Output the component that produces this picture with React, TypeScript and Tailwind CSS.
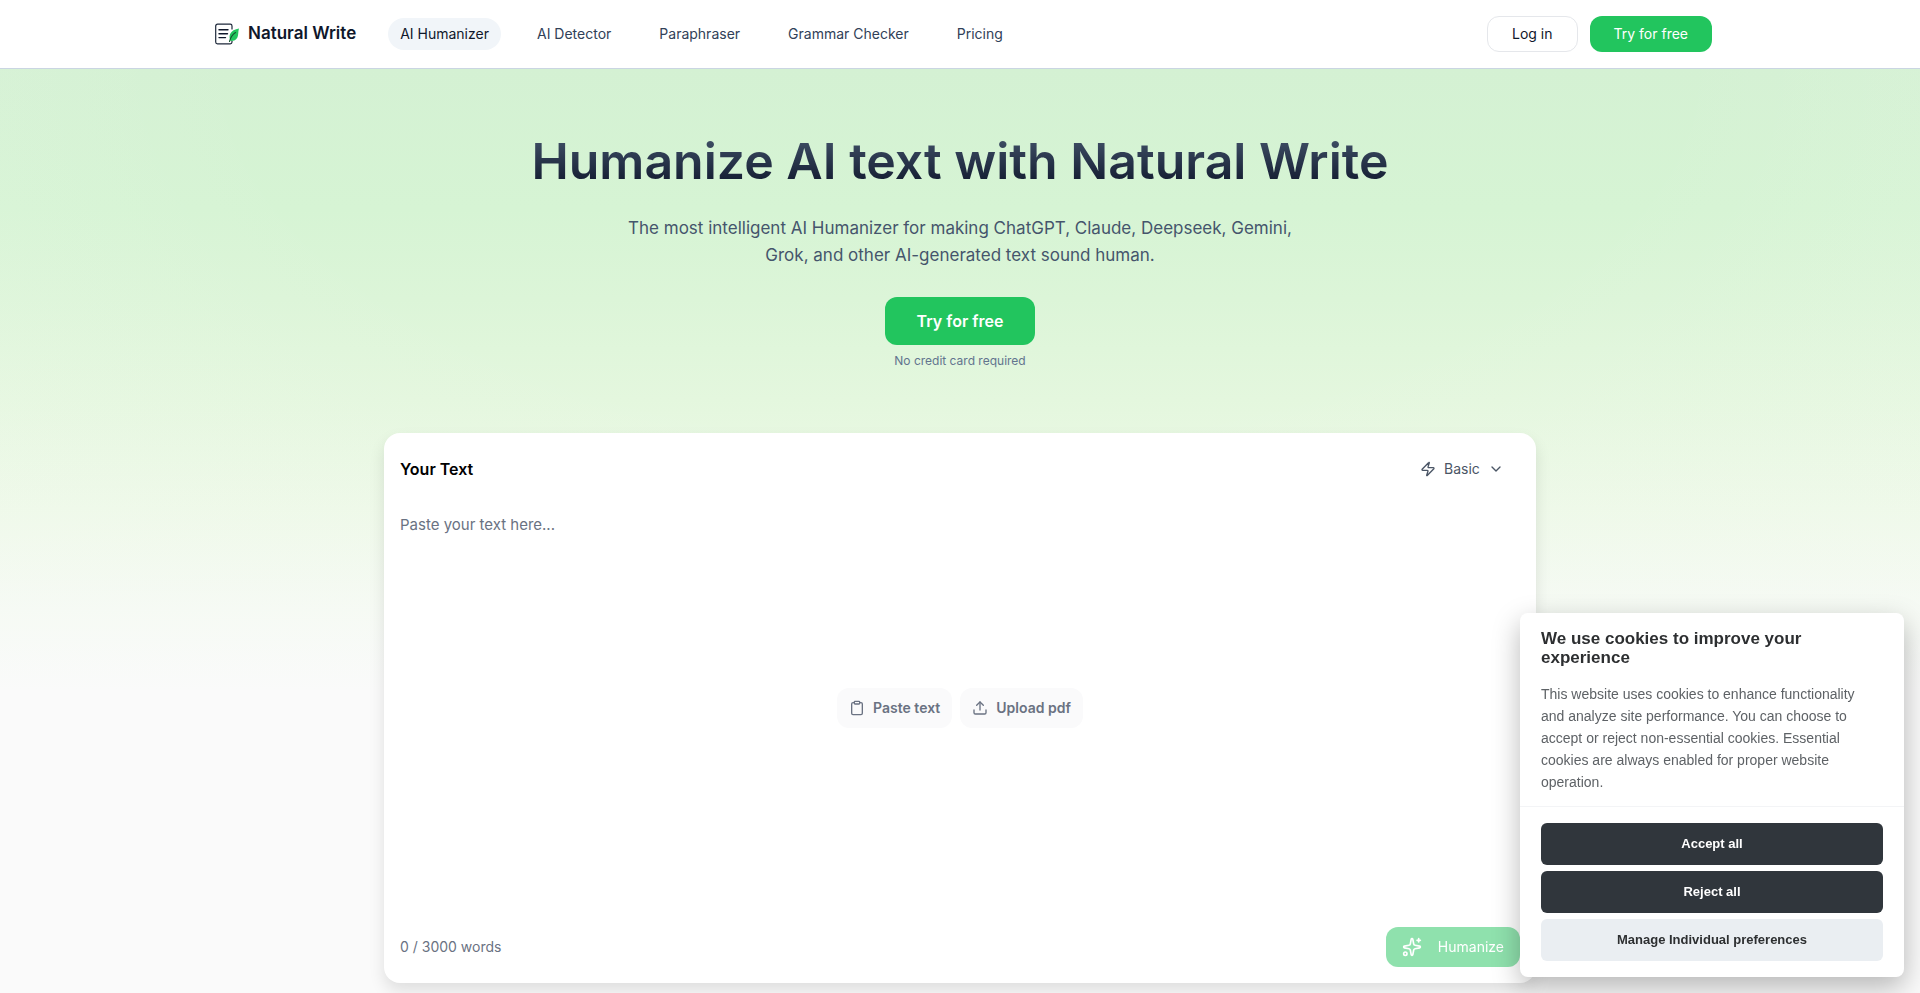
import React from "react";
import { ChevronDown, Clipboard, Sparkles, Upload, Zap } from "lucide-react";

const links = [
  { label: "AI Humanizer", active: true },
  { label: "AI Detector", active: false },
  { label: "Paraphraser", active: false },
  { label: "Grammar Checker", active: false },
  { label: "Pricing", active: false },
];

function Logo(): React.JSX.Element {
  return (
    <svg width="26" height="22" viewBox="0 0 26 22" fill="none" aria-hidden="true">
      <path
        d="M18 6.500V3A1.800 1.800 0 0 0 16.200 1.200H3.500A1.800 1.800 0 0 0 1.700 3v16a1.800 1.800 0 0 0 1.800 1.800h12.700A1.800 1.800 0 0 0 18 19v-1"
        stroke="#1e293b"
        strokeWidth="1.2"
      />
      <path d="M5 6.800h9M5 10.800h8.500M5 14.600h6.500" stroke="#0f172a" strokeWidth="1.400" strokeLinecap="round" />
      <path d="M25 5.500c-4 .5-7.500 2.500-8.900 5.500-1 2.300-.6 4.700.5 7 2.900.2 5.500-.8 6.800-3.500 1.200-2.500.6-5.900 1.600-9Z" fill="#22c55e" />
      <path d="M21.500 9.500c-3 2-5 5-6 9" stroke="#14532d" strokeWidth="1.100" strokeLinecap="round" />
    </svg>
  );
}

function Navbar(): React.JSX.Element {
  return (
    <header className="border-b border-slate-300 bg-white">
      <div className="mx-auto flex h-[68px] max-w-[1504px] items-center justify-between">
        <div className="flex items-center">
          <a href="#" className="flex items-center gap-2 pl-1.5 text-[17px] font-semibold text-slate-900">
            <Logo />
            Natural Write
          </a>
          <nav className="ml-8 flex gap-6">
            {links.map((link) => (
              <a
                key={link.label}
                href="#"
                className={
                  link.active
                    ? "rounded-full bg-slate-100 px-3 py-1.5 text-sm text-slate-900"
                    : "rounded-full px-3 py-1.5 text-sm text-slate-700"
                }
              >
                {link.label}
              </a>
            ))}
          </nav>
        </div>
        <div className="flex gap-3">
          <button className="h-9 rounded-xl border border-gray-200 px-6 text-sm text-slate-900">
            Log in
          </button>
          <button className="h-9 rounded-xl bg-[#22c55e] px-6 text-sm text-white">
            Try for free
          </button>
        </div>
      </div>
    </header>
  );
}

function Hero(): React.JSX.Element {
  return (
    <section className="flex flex-col items-center pt-16 text-center">
      <h1 className="bg-gradient-to-t from-slate-900 to-slate-600 bg-clip-text text-[50px] leading-[56px] font-semibold text-transparent">
        Humanize AI text with Natural Write
      </h1>
      <p className="mt-[26px] max-w-[700px] text-[17px] leading-[27px] text-slate-600">
        The most intelligent AI Humanizer for making ChatGPT, Claude, Deepseek,
        Gemini, Grok, and other AI-generated text sound human.
      </p>
      <button className="mt-7 h-12 rounded-xl bg-[#22c55e] px-8 text-base font-semibold text-white">
        Try for free
      </button>
      <p className="mt-2 text-xs text-slate-500">No credit card required</p>
    </section>
  );
}

function Editor(): React.JSX.Element {
  return (
    <section className="mx-auto mt-16 flex h-[550px] max-w-6xl flex-col rounded-2xl bg-white p-4 shadow-[0_8px_16px_rgba(0,0,0,0.11)]">
      <div className="flex h-10 items-center justify-between">
        <label htmlFor="text" className="font-semibold text-black">
          Your Text
        </label>
        <div className="mr-4 flex items-center text-gray-600">
          <Zap size={16} />
          <select
            aria-label="Mode"
            className="appearance-none bg-transparent px-2 text-sm"
          >
            <option>Basic</option>
          </select>
          <ChevronDown size={16} />
        </div>
      </div>
      <div className="grid flex-1 items-center justify-items-center pt-6">
        <textarea
          id="text"
          placeholder="Paste your text here..."
          className="col-start-1 row-start-1 h-full w-full resize-none text-[15px] leading-6 outline-none placeholder:text-gray-500"
        />
        <div className="col-start-1 row-start-1 flex gap-2 pb-6">
          <button className="flex h-10 items-center gap-2 rounded-xl bg-[#fafafb] px-3 text-sm font-semibold text-gray-500">
            <Clipboard size={16} />
            Paste text
          </button>
          <button className="flex h-10 items-center gap-2 rounded-xl bg-[#fafafb] px-3 text-sm font-semibold text-gray-500">
            <Upload size={16} />
            Upload pdf
          </button>
        </div>
      </div>
      <div className="flex items-center justify-between">
        <span className="text-sm text-gray-500">0 / 3000 words</span>
        <button
          disabled
          className="flex h-10 items-center gap-4 rounded-xl bg-[#22c55e] px-4 text-sm text-white opacity-50"
        >
          <Sparkles size={20} />
          Humanize
        </button>
      </div>
    </section>
  );
}

function CookieBanner(): React.JSX.Element {
  return (
    <aside className="fixed right-4 bottom-4 w-96 rounded-lg bg-white font-['Liberation_Sans',Arial,sans-serif] shadow-[0_10px_28px_rgba(2,2,3,0.28)]">
      <div className="border-b border-gray-100 pt-4 pr-9 pb-[13px] pl-[21px]">
        <h2 className="text-[17px] leading-[19px] font-bold text-[#2d2f31]">
          We use cookies to improve your experience
        </h2>
        <p className="mt-4 text-sm leading-[22px] text-[#5e6266]">
          This website uses cookies to enhance functionality and analyze site
          performance. You can choose to accept or reject non-essential cookies.
          Essential cookies are always enabled for proper website operation.
        </p>
      </div>
      <div className="flex flex-col gap-1.5 px-[21px] py-4">
        <button className="h-[42px] rounded-md bg-[#30363c] text-[13px] font-bold text-white">
          Accept all
        </button>
        <button className="h-[42px] rounded-md bg-[#30363c] text-[13px] font-bold text-white">
          Reject all
        </button>
        <button className="h-[42px] rounded-md bg-[#eaeef2] text-[13px] font-bold text-[#2d2f31]">
          Manage Individual preferences
        </button>
      </div>
    </aside>
  );
}

export default function App(): React.JSX.Element {
  return (
    <div className="flex min-h-screen flex-col bg-[#fafafa] font-[Inter,sans-serif]">
      <Navbar />
      <main className="flex-1 bg-[radial-gradient(ellipse_1400px_700px_at_top,transparent_50%,rgba(250,250,250,0.2)),linear-gradient(to_bottom,#d4f1d3_0px,#d6f4d4_140px,#dcf5d8_230px,#e4f7de_330px,#edf9e7_440px,#f5faf3_540px,#fafafa_620px)] pb-2">
        <Hero />
        <Editor />
      </main>
      <CookieBanner />
    </div>
  );
}
